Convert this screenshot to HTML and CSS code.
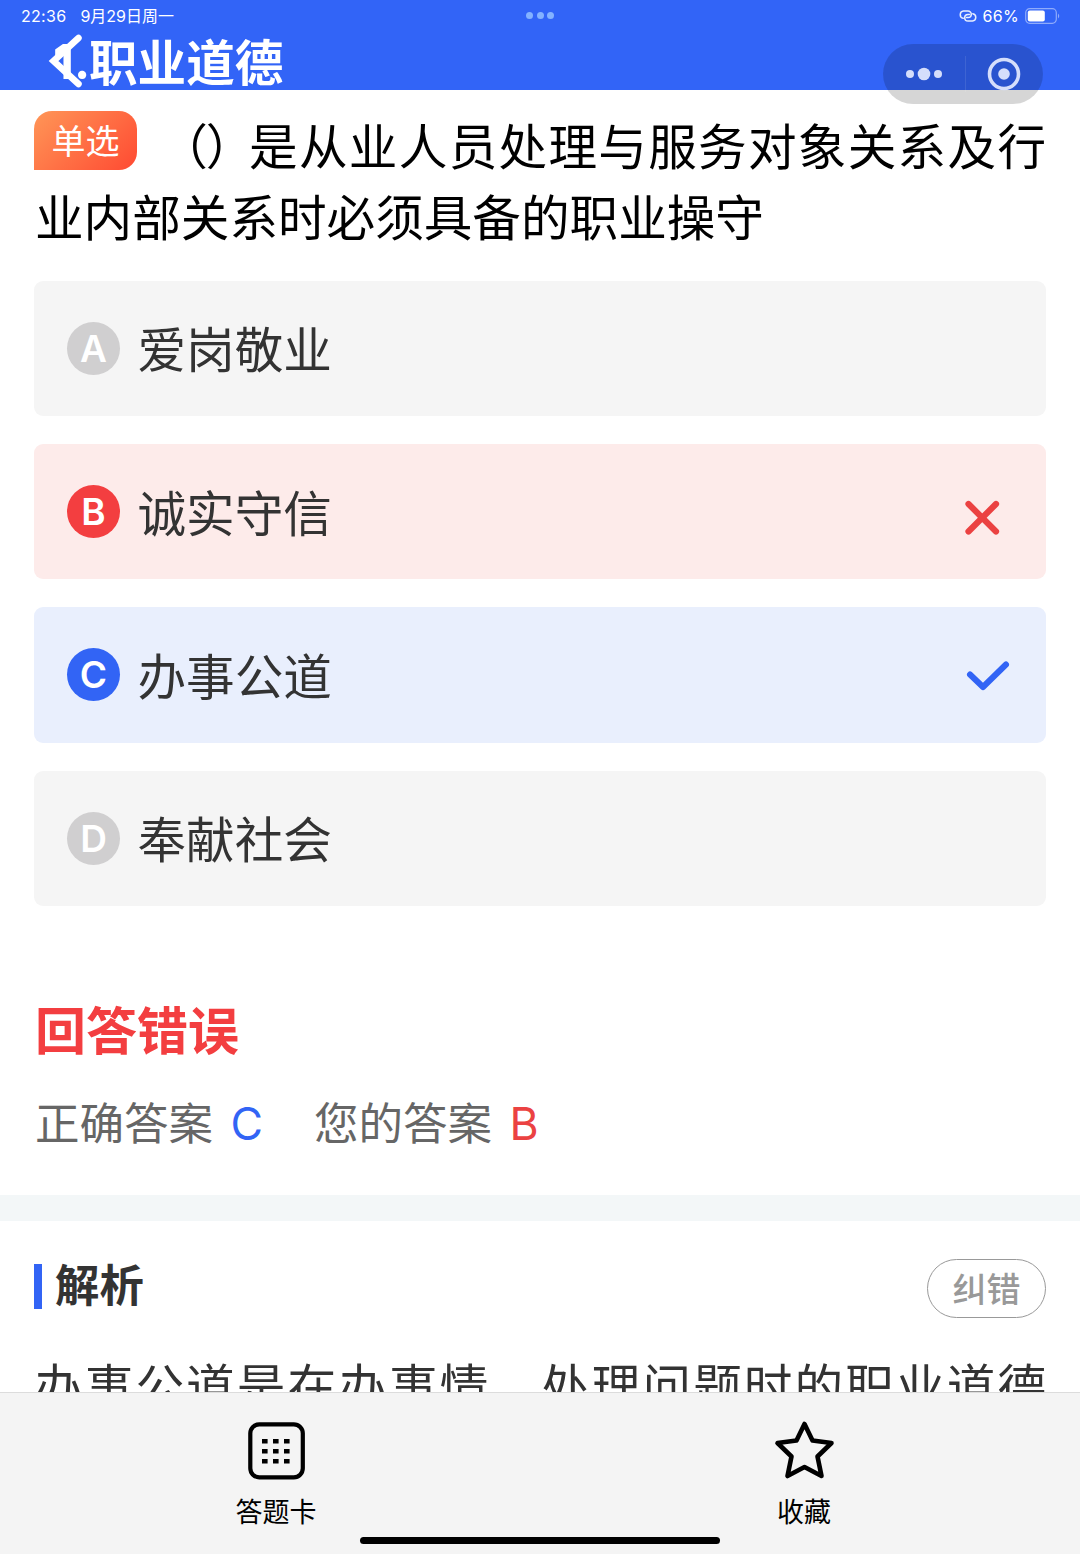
FILE: index.html
```
<!DOCTYPE html>
<html lang="zh-CN">
<head>
  <meta charset="UTF-8" />
  <meta name="viewport" content="width=device-width, initial-scale=1" />
  <title>职业道德</title>
  <link rel="stylesheet" href="styles.css">
</head>
<body>
  <header class="header">
    <div class="status-bar">
      <div class="status-left">
        <span class="time">22:36</span>
        <span class="date">9月29日周一</span>
      </div>
      <div class="status-dots"><i></i><i></i><i></i></div>
      <div class="status-right">
        <svg class="link-icon" width="18" height="12" viewBox="0 0 18 12" fill="none" stroke="#e6edff" stroke-width="1.5" stroke-linecap="round">
          <path d="M4.200 8.300A3.700 3.700 0 0 1 4.500 1H9a3.300 3.300 0 0 1 0 6.600H7.500" />
          <path d="M13.800 3.700A3.700 3.700 0 0 1 13.500 11H9a3.300 3.300 0 0 1 0-6.600h1.500" />
        </svg>
        <span class="percent">66%</span>
        <svg class="battery" width="35" height="16" viewBox="0 0 35 16">
          <rect x="0.700" y="0.700" width="30.600" height="14.600" rx="4" fill="none" stroke="#8fabfb" stroke-width="1.200" />
          <rect x="2.800" y="2.600" width="17" height="10.800" rx="2" fill="#fff" />
          <path d="M33 5.500q2.500 2.500 0 5z" fill="#8fabfb" />
        </svg>
      </div>
    </div>
    <h1 class="title"><span class="num">1.</span>职业道德</h1>
    <svg class="back" width="36" height="56" viewBox="0 0 36 56" fill="none" stroke="#fff" stroke-width="6.500" stroke-linecap="round">
      <path d="M30.500 5L5.500 28L30.500 51" />
    </svg>
    <div class="capsule">
      <svg width="40" height="16" viewBox="0 0 40 16" fill="#d5defb">
        <circle cx="6" cy="8" r="4" />
        <circle cx="20" cy="8" r="6.300" />
        <circle cx="34" cy="8" r="4" />
      </svg>
      <span class="divider"></span>
      <svg width="34" height="34" viewBox="0 0 34 34">
        <circle cx="17" cy="17" r="14.500" fill="none" stroke="#d5defb" stroke-width="3.600" />
        <circle cx="17" cy="17" r="5.800" fill="#d5defb" />
      </svg>
    </div>
  </header>

  <main class="content">
    <div class="question"><span class="tag">单选</span><span class="blank">（）</span>是从业人员处理与服务对象关系及行业内部关系时必须具备的职业操守</div>

    <div class="options">
      <div class="option">
        <span class="letter">A</span>
        <span class="text">爱岗敬业</span>
      </div>
      <div class="option wrong">
        <span class="letter">B</span>
        <span class="text">诚实守信</span>
        <svg class="mark" width="44" height="44" viewBox="0 0 44 44" fill="none" stroke="#eb4242" stroke-width="6.200" stroke-linecap="round">
          <path d="M8.500 14L36 41.500M36 14L8.500 41.500" />
        </svg>
      </div>
      <div class="option right">
        <span class="letter">C</span>
        <span class="text">办事公道</span>
        <svg class="mark" width="44" height="44" viewBox="0 0 44 44" fill="none" stroke="#3264f5" stroke-width="6" stroke-linecap="round" stroke-linejoin="round">
          <path d="M10 21.500L23 34L46 11.500" />
        </svg>
      </div>
      <div class="option">
        <span class="letter">D</span>
        <span class="text">奉献社会</span>
      </div>
    </div>

    <div class="result">
      <h2>回答错误</h2>
      <div class="answers">
        <span>正确答案</span><b class="blue">C</b>
        <span>您的答案</span><b class="red">B</b>
      </div>
    </div>

    <div class="band"></div>

    <div class="analysis">
      <div class="analysis-head">
        <h3>解析</h3>
        <button class="report">纠错</button>
      </div>
      <p>办事公道是在办事情，处理问题时的职业道德</p>
    </div>
  </main>

  <footer class="footer">
    <div class="tab">
      <svg width="60" height="60" viewBox="0 0 60 60">
        <rect x="4.300" y="3.300" width="52.500" height="53" rx="9" fill="none" stroke="#000" stroke-width="4.200" />
        <path d="M16 20.300h29M16 30.300h29M16 40.300h29" stroke="#000" stroke-width="4.600" stroke-dasharray="5.600 5.400" />
      </svg>
      <span>答题卡</span>
    </div>
    <div class="tab">
      <svg width="60" height="60" viewBox="0 0 60 60" fill="none" stroke="#000" stroke-width="4.600" stroke-linejoin="round">
        <path d="M30.500 3L38.500 19.500L57.500 22L43.500 35.500L47.500 55L30.500 46L13.500 55L17.500 35.500L3.500 22L22.500 19.500Z" />
      </svg>
      <span>收藏</span>
    </div>
    <div class="home-indicator"></div>
  </footer>
</body>
</html>
```
FILE: styles.css
```
* {
  box-sizing: border-box;
}
body {
  margin: 0;
  height: 1554px;
  display: flex;
  flex-direction: column;
  overflow: hidden;
  background: #fff;
  color: #000;
  font-family: 'Inter', 'Noto Sans CJK SC', sans-serif;
}
h1, h2, h3, p {
  margin: 0;
}
svg {
  display: block;
  overflow: visible;
}

/* header */
.header {
  position: relative;
  flex: none;
  height: 89.5px;
  background: #3264f7;
  color: #fff;
}
.status-bar {
  display: grid;
  grid-template-columns: 1fr auto 1fr;
  align-items: center;
  height: 31px;
  padding: 0 20px 0 21px;
  font-size: 16px;
  line-height: 20px;
  letter-spacing: 0.3px;
}
.status-left {
  display: flex;
  gap: 14px;
}
.date {
  letter-spacing: 0;
}
.status-dots {
  display: flex;
  gap: 3.5px;
  margin-right: 1px;
}
.status-dots i {
  width: 7px;
  height: 7px;
  border-radius: 50%;
  background: #84b2ff;
}
.status-right {
  display: flex;
  align-items: center;
  justify-content: flex-end;
  gap: 6px;
}
.title {
  display: flex;
  padding-left: 53px;
  font-family: 'Noto Sans CJK SC', sans-serif;
  font-size: 48.6px;
  line-height: 58px;
  font-weight: 700;
}
.num {
  width: 36px;
  padding-top: 2px;
  font-family: 'Inter', sans-serif;
}
.back {
  position: absolute;
  left: 48px;
  top: 33px;
}
.capsule {
  position: absolute;
  left: 883px;
  top: 44px;
  z-index: 1;
  display: flex;
  align-items: center;
  justify-content: space-between;
  width: 160px;
  height: 60px;
  padding: 0 22px 1px 21px;
  border-radius: 30px;
  background: rgba(0, 0, 0, 0.16);
}
.divider {
  width: 1px;
  height: 36px;
  background: rgba(255, 255, 255, 0.1);
}

/* question */
.content {
  flex: 1;
  min-height: 0;
  overflow: hidden;
}
.question {
  padding: 21px 34px 0 35px;
  font-size: 48.6px;
  line-height: 71px;
  text-align: justify;
  text-spacing-trim: space-all;
}
.tag {
  display: inline-block;
  width: 103px;
  height: 59px;
  margin-left: -1px;
  margin-right: 10px;
  border-radius: 18px 18px 18px 0;
  background: linear-gradient(135deg, #ff9657, #ff4a32);
  color: #fff;
  font-size: 34px;
  line-height: 62px;
  text-align: center;
  vertical-align: 11px;
}
.blank {
  margin-left: 11px;
  margin-right: -3px;
  letter-spacing: -3.5px;
}
.options {
  display: flex;
  flex-direction: column;
  gap: 28px;
  padding: 27px 34px 0;
}
.option {
  display: flex;
  align-items: center;
  height: 135.4px;
  padding: 0 42px 0 33px;
  border-radius: 9px;
  background: #f5f5f5;
  color: #333;
  font-size: 48.6px;
}
.letter {
  width: 53px;
  height: 53px;
  margin-right: 17.5px;
  border-radius: 50%;
  background: #d0cfd0;
  color: #fff;
  font-size: 37px;
  font-weight: 600;
  line-height: 53px;
  text-align: center;
}
.text {
  flex: 1;
  padding-bottom: 2px;
}
.wrong {
  background: #fdebea;
}
.wrong .letter {
  background: #f33e40;
}
.right {
  background: #e9effd;
}
.right .letter {
  background: #3264f5;
}

/* result */
.result {
  padding: 89px 34px 0 35px;
  height: 289px;
}
.result h2 {
  color: #f33e40;
  font-size: 51px;
  line-height: 74px;
}
.answers {
  display: flex;
  align-items: center;
  margin-top: 23px;
  color: #666;
  font-size: 44.5px;
  line-height: 64px;
}
.answers b {
  width: 66px;
  margin: 0 17.5px;
  font-weight: 400;
}
.blue {
  color: #3264f5;
}
.red {
  color: #eb4242;
}
.band {
  height: 26px;
  background: #f3f7f8;
}

/* analysis */
.analysis {
  padding: 38px 34px 0;
}
.analysis-head {
  display: flex;
  justify-content: space-between;
  align-items: flex-start;
}
.analysis h3 {
  margin-top: 5px;
  padding-left: 13px;
  border-left: 8px solid #3264f5;
  color: #333;
  font-size: 44.4px;
  line-height: 45px;
}
.report {
  width: 119px;
  height: 59px;
  padding: 0 0 3px;
  border: 1px solid #999;
  border-radius: 30px;
  background: #fff;
  color: #999;
  font-family: inherit;
  font-size: 34px;
  font-weight: 500;
}
.analysis p {
  margin-top: 34px;
  color: #333;
  font-size: 48.6px;
  line-height: 71px;
  white-space: nowrap;
  text-align-last: justify;
}

/* footer */
.footer {
  position: relative;
  flex: none;
  display: flex;
  height: 162px;
  padding: 28px 12px 0;
  border-top: 1px solid #dcdcdc;
  background: #f4f4f4;
}
.tab {
  flex: 1;
  display: flex;
  flex-direction: column;
  align-items: center;
  gap: 12px;
  font-size: 27px;
  line-height: 40px;
}
.home-indicator {
  position: absolute;
  left: 360px;
  bottom: 10px;
  width: 360px;
  height: 7px;
  border-radius: 4px;
  background: #000;
}
```
